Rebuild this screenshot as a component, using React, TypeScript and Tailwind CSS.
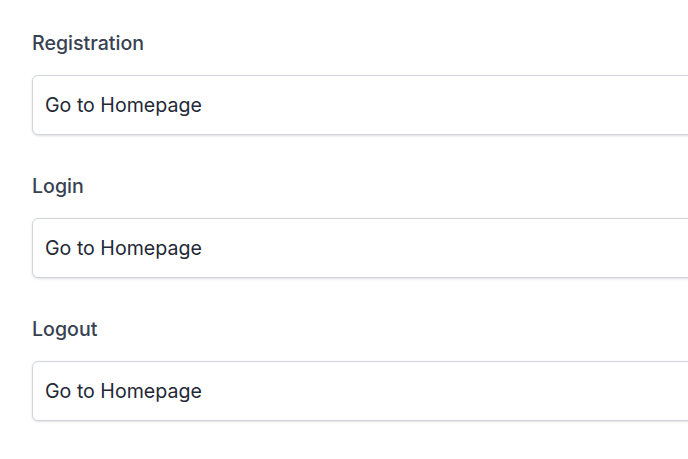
import React from "react";

const fields = ["Registration", "Login", "Logout"];

export default function App() {
  return (
    <div
      className="w-full h-[459px] overflow-hidden bg-white"
      style={{ fontFamily: "Inter, 'Noto Sans', sans-serif" }}
    >
      <div className="pl-8 pt-[29px] flex flex-col gap-[37px]">
        {fields.map((f) => (
          <div key={f} className="flex flex-col">
            <label className="text-[19.6px] leading-[28px] font-medium text-[#374151] mb-[18px]">
              {f}
            </label>
            <div className="w-[800px] h-[60px] border border-[#d1d5db] rounded-md bg-white shadow-sm flex items-center pl-[12px] pt-[2px] text-[19.6px] text-[#1f2937]">
              Go to Homepage
            </div>
          </div>
        ))}
      </div>
    </div>
  );
}
